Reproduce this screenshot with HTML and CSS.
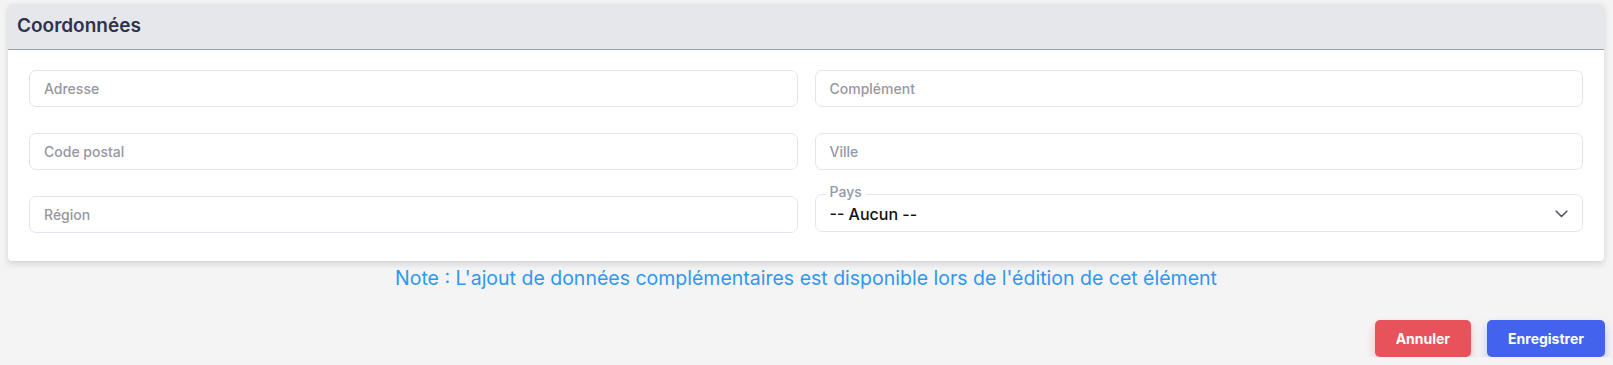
FILE: index.html
```html
<!DOCTYPE html>
<html lang="fr">
<head>
<meta charset="utf-8">
<title>Coordonnées</title>
<link rel="stylesheet" href="styles.css">
</head>
<body>
<div class="page">
  <section class="card">
    <header class="card-header"><h2>Coordonnées</h2></header>
    <div class="card-body">
      <div class="field"><span class="placeholder">Adresse</span></div>
      <div class="field"><span class="placeholder">Complément</span></div>
      <div class="field"><span class="placeholder">Code postal</span></div>
      <div class="field"><span class="placeholder">Ville</span></div>
      <div class="field"><span class="placeholder">Région</span></div>
      <fieldset class="field select">
        <legend>Pays</legend>
        <span class="value">-- Aucun --</span>
        <svg class="chevron" width="13" height="8" viewBox="0 0 13 8"><path d="M1.2 1.2l5.3 5.3 5.3-5.3" fill="none" stroke="#4b5563" stroke-width="1.6" stroke-linecap="round" stroke-linejoin="round"/></svg>
      </fieldset>
    </div>
  </section>
  <p class="note">Note : L'ajout de données complémentaires est disponible lors de l'édition de cet élément</p>
  <div class="actions">
    <button class="btn btn-cancel">Annuler</button>
    <button class="btn btn-save">Enregistrer</button>
  </div>
</div>
</body>
</html>
```

FILE: styles.css
```css
* { box-sizing: border-box; }
html, body { margin: 0; background: #f4f4f4; }
body { font-family: Inter, "Noto Sans", sans-serif; }
.page { padding: 4px 9px 0 8px; }
.card {
  background: #fff;
  border-radius: 4px;
  box-shadow: 0 3px 6px rgba(60, 70, 100, 0.18), 0 0 1px rgba(0,0,0,0.08);
  overflow: hidden;
}
.card-header {
  background: #e5e7eb;
  height: 46px;
  border-bottom: 1px solid #9ca3af;
  display: flex;
  align-items: center;
  padding-left: 9px;
}
.card-header h2 {
  margin: 0;
  font-size: 19px;
  font-weight: 600;
  color: #2e3350;
  position: relative;
  top: -1px;
}
.card-body {
  display: grid;
  grid-template-columns: 1fr 1fr;
  column-gap: 17px;
  row-gap: 26px;
  padding: 20px 21px 28px 21px;
}
.field {
  height: 37px;
  border: 1px solid #e2e5ee;
  border-radius: 7px;
  display: flex;
  align-items: center;
  padding: 0 14px;
  margin: 0;
  min-width: 0;
}
.placeholder {
  font-size: 14px;
  font-weight: 500;
  color: #9697a2;
}
.select {
  position: relative;
  height: 38px;
  margin-top: -2px;
  padding: 0 14px 0 14px;
}
.select legend {
  position: absolute;
  top: -12px;
  left: 10px;
  padding: 0 4px;
  background: #fff;
  font-size: 14px;
  font-weight: 500;
  color: #9697a2;
  line-height: 18px;
}
.value {
  font-size: 16px;
  font-weight: 500;
  color: #111;
  flex: 1;
  position: relative;
  top: 1px;
}
.chevron { position: relative; top: 1px; }
.note {
  margin: 5px 0 0;
  text-align: center;
  color: #3197ef;
  font-size: 19.5px;
  line-height: 24px;
}
.actions {
  display: flex;
  justify-content: flex-end;
  gap: 16px;
  margin-top: 30px;
  margin-right: -1px;
}
.btn {
  height: 37px;
  border: none;
  border-radius: 5px;
  color: #fff;
  font-family: Inter, sans-serif;
  font-size: 14px;
  font-weight: 700;
  padding: 0 21px;
}
.btn-cancel {
  background: #e8525b;
  box-shadow: 0 5px 10px rgba(232, 82, 91, 0.32);
}
.btn-save {
  background: #4363ee;
  box-shadow: 0 5px 10px rgba(67, 99, 238, 0.32);
}
```
